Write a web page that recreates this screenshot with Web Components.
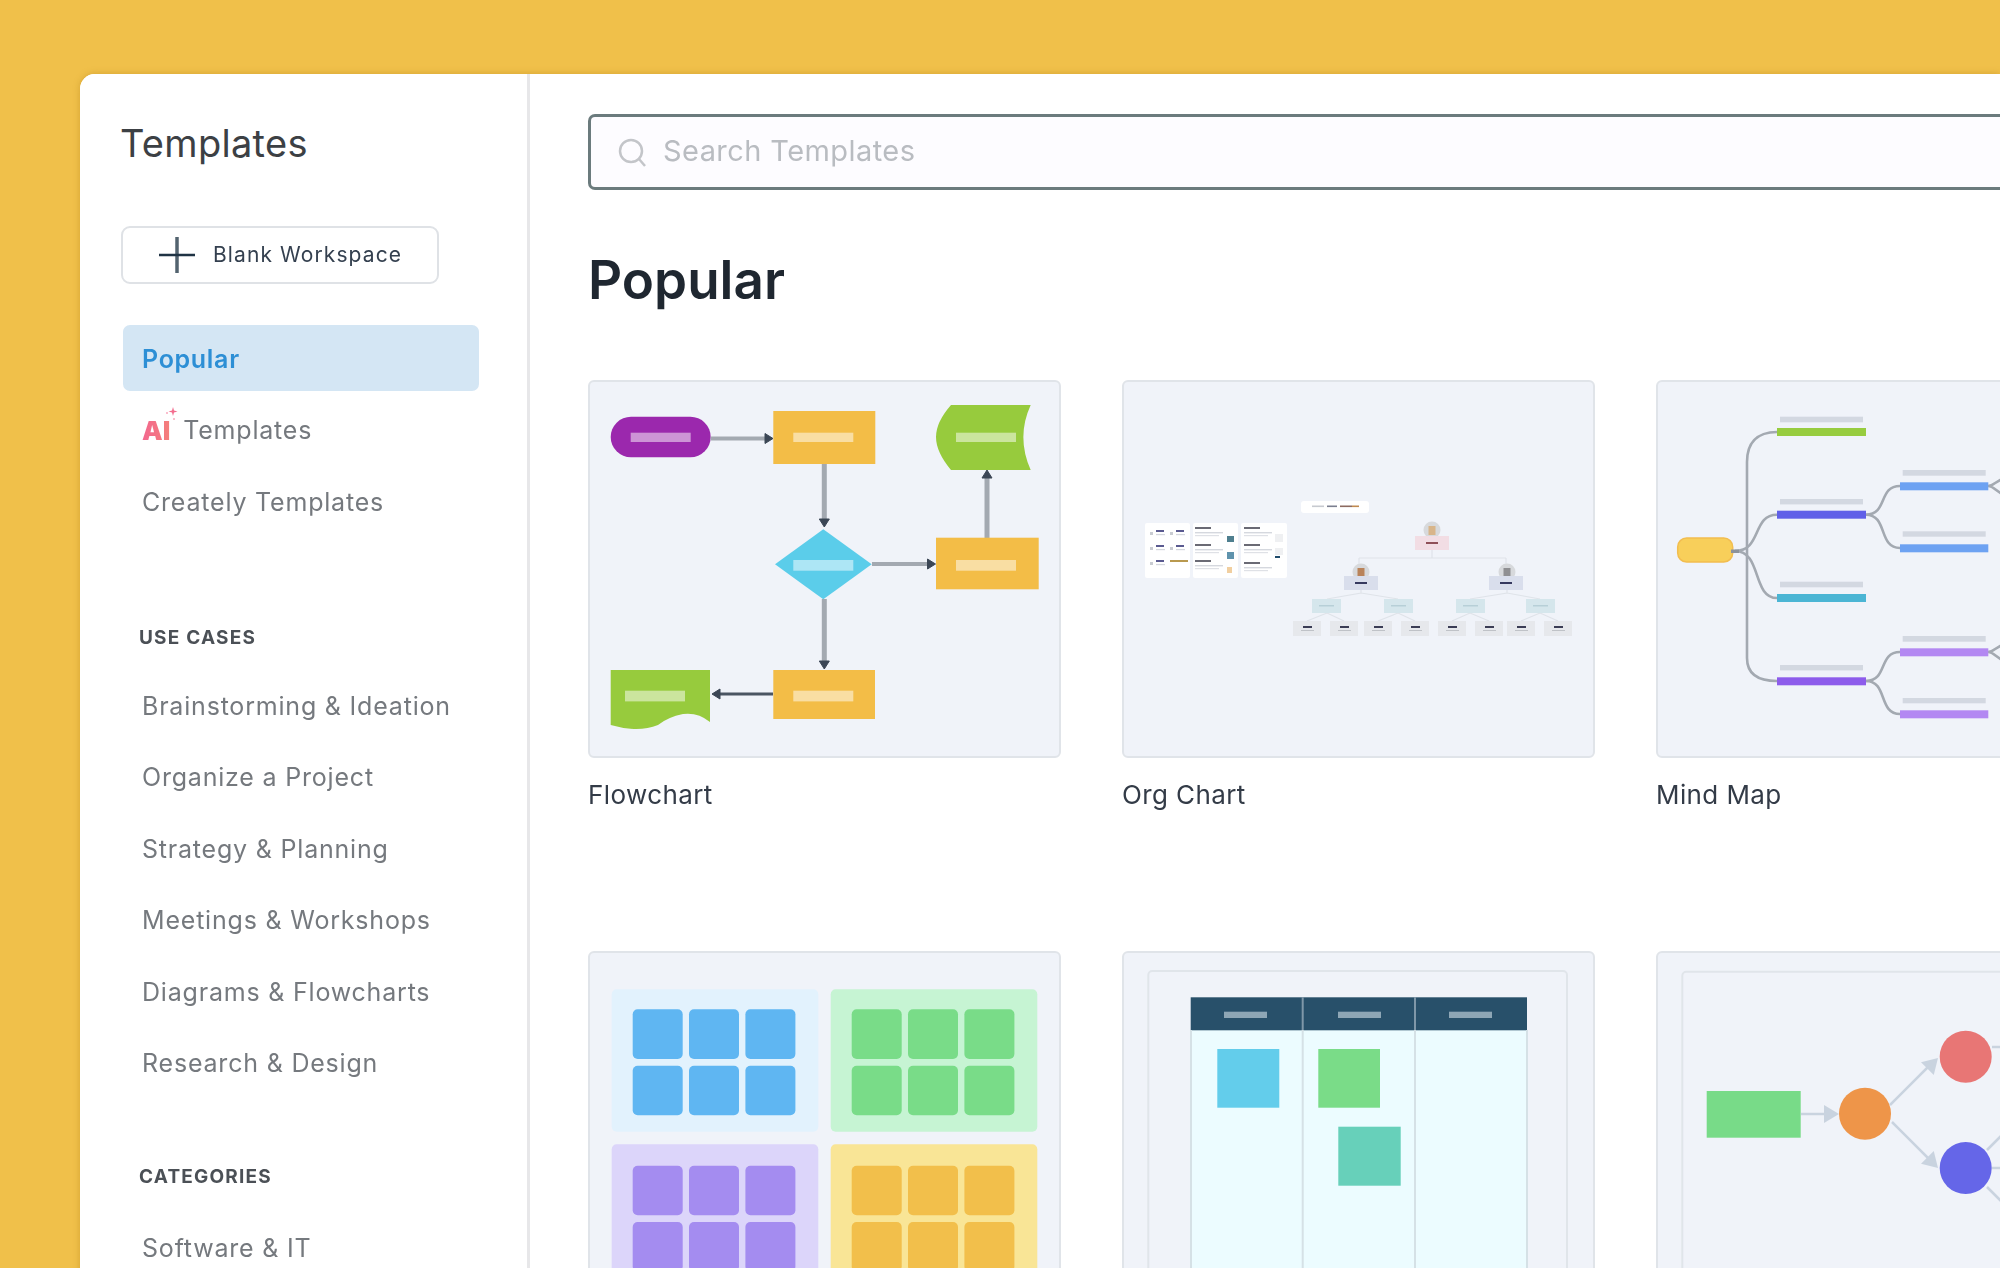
<!DOCTYPE html>
<html lang="en">
<head>
<meta charset="utf-8">
<title>Templates</title>
<style>
html,body{margin:0;padding:0;width:2000px;height:1268px;overflow:hidden;background:#f0c04a;font-family:Inter,"Liberation Sans",sans-serif}
</style>
</head>
<body>
<template-app></template-app>
<script>
const r=(x,y,w,h,f,rx=0)=>`<rect x="${x}" y="${y}" width="${w}" height="${h}" fill="${f}" rx="${rx}"/>`;
const LAB='rgba(255,255,255,.5)';
const gray='#a3a9b1',dark='#3b4655';
const vArrow=(x,y1,y2)=>{const d=y2>y1?1:-1;return `<path d="M${x} ${y1}V${y2-d*8}" stroke="${gray}" stroke-width="5"/><path d="M${x-5} ${y2-d*8}H${x+5}L${x} ${y2}Z" fill="${dark}" stroke="${dark}" stroke-width="1"/>`};
const hArrow=(x1,x2,y,c=gray,w=4)=>{const d=x2>x1?1:-1;return `<path d="M${x1} ${y}H${x2-d*8}" stroke="${c}" stroke-width="${w}"/><path d="M${x2-d*8} ${y-5}V${y+5}L${x2} ${y}Z" fill="${dark}" stroke="${dark}" stroke-width="1"/>`};

const flow=`
${r(22.7,36.7,100,40.6,'#9b28ad',20.3)}${r(42.7,52.7,60,9.3,LAB)}
${hArrow(122.7,185,58.5)}
${r(185.3,31,102,53,'#f3bd47')}${r(205.3,52.7,60,9.3,LAB)}
${vArrow(236.3,84,147)}
<path d="M363 25H442.7Q428 57 442.7 90H363Q348 72 348 57Q348 42 363 25Z" fill="#97cb3d"/>${r(368,52.7,60,9.3,LAB)}
${vArrow(399,158,90)}
<path d="M235.3 149.3L283.7 184.3L235.3 219.3L187 184.3Z" fill="#5bcdea"/>${r(205.3,180,60,10.7,LAB)}
${hArrow(284,347.5,184)}
${r(348,157.7,102.7,51.6,'#f3bd47')}${r(368,180,60,10.7,LAB)}
${vArrow(236.3,219,289)}
${r(185.3,290,101.7,49,'#f3bd47')}${r(205.3,310.7,60,10.7,LAB)}
${hArrow(185,124,314,'#4a5562',3)}
<path d="M22.7 290H122V342Q110 332 95 334Q80 337 70 345Q50 353 22.7 345Z" fill="#97cb3d"/>${r(37,310.7,60,10.7,LAB)}`;

const org=(()=>{
  let s='';
  const pane=(x,w)=>r(x,143,w,55,'#fff',2);
  s+=pane(23,45)+pane(71,45)+pane(119,46)+r(179,121,68,12,'#fff',3);
  s+=r(190,125.5,12,1.6,'#c7cad0')+r(205,125.5,10,1.6,'#7b7f8f')+r(218,125.5,12,1.6,'#8c6a60')+r(230,125.5,7,1.6,'#c08a50');
  [[28,150],[28,165],[28,180],[48,150],[48,165]].forEach(([x,y])=>{s+=r(x+6,y,8,2,'#5a5a90')+r(x+6,y+4,9,1.2,'#d5d8de')+r(x,y+2,3,3,'#c9ccd2')});
  s+=r(48,180,18,2,'#b9994f');
  [[73,147],[73,164],[73,180],[122,147],[122,164],[122,182]].forEach(([x,y])=>{s+=r(x,y,16,2,'#6a6a74')+r(x,y+5,28,1.4,'#d5d8de')+r(x,y+8,24,1.2,'#dfe1e6')});
  s+=r(105,156,7,6,'#4f7f8f')+r(105,172,7,7,'#5f93ad')+r(105,187,5,6,'#f1cfa0')+r(153,176,5,2,'#1f4b6b')+r(153,154,8,8,'#eff0f2')+r(153,168,8,7,'#eff0f2');
  s+=`<path d="M237 178H384M310 170V178M237 178V184M384 178V184M239 210V213L205 219M239 213L276 219M385 210V213L348 219M385 213L418 219M205 233L185 241M205 233L222 241M276 233L256 241M276 233L293 241M348 233L330 241M348 233L367 241M418 233L399 241M418 233L436 241" stroke="#dfe3e9" stroke-width="1.2" fill="none"/>`;
  const avatar=(x,y,c)=>`<circle cx="${x}" cy="${y}" r="8.5" fill="#d7d9dc"/>${r(x-3.5,y-4,7,9,c)}`;
  s+=avatar(310,150,'#d8b58a')+avatar(239,192,'#b9835a')+avatar(385,192,'#8f8f92');
  s+=r(293,156,34,14,'#f2dde4')+r(222,196,34,14,'#d9deec')+r(367,196,34,14,'#d9deec');
  s+=r(304,162,12,2,'#8f5058')+r(233,202,12,2,'#36395f')+r(378,202,12,2,'#36395f');
  [190,262,334,404].forEach(x=>{s+=r(x,219,29,14,'#d5e6ec')+r(x+7,225,15,1.5,'#b7cfd7')});
  [171,208,242,279,316,353,385,422].forEach(x=>{s+=r(x,241,28,15,'#e6e8ec')+r(x+10,246,9,2,'#3b3d55')+r(x+8,250,13,1,'#bfc2c7')});
  return `<g style="filter:blur(.7px)">${s}</g>`;
})();

const mindBar=(x,y,w,c)=>r(x,y,w,8,c);
const mind=`
<g fill="none" stroke="#a3a9b1" stroke-width="2.6">
<path d="M121 52C100 52 91 64 91 82V278C91 292 100 301 121 301"/>
<path d="M79 171C106 171 96 134.700 121 134.700"/><path d="M79 171C106 171 96 218 121 218"/>
<path d="M210 134.700C232 134.700 222 106 244 106"/><path d="M210 134.700C232 134.700 222 168 244 168"/>
<path d="M210 301C232 301 222 272 244 272"/><path d="M210 301C232 301 222 334 244 334"/>
<path d="M332 106C338 106 340 100 350 98M332 106C338 106 340 112 350 116M332 272C338 272 340 266 350 264M332 272C338 272 340 278 350 282"/>
</g>
${r(21.7,158,55,24,'#f8cf5a',9).replace('/>',' stroke="#f2bd4f" stroke-width="1.500"/>')}
${r(75,169.500,8,3.500,'#8d939b')}
${r(124,36.700,83,5.600,'#d3d8e1')}${mindBar(121,48,89,'#97cc3f')}
${r(124,119,83,5.400,'#d3d8e1')}${mindBar(121,130.700,89,'#6060e8')}
${r(124,201.700,83,5.600,'#d3d8e1')}${mindBar(121,214,89,'#4bb5d4')}
${r(124,285,83,5.400,'#d3d8e1')}${mindBar(121,297.300,89,'#8d5ceb')}
${r(246.700,90,83,5.700,'#d3d8e1')}${mindBar(244,102.300,88.300,'#6da2f2')}
${r(246.700,151.300,83,5.400,'#d3d8e1')}${mindBar(244,164.300,88.300,'#6da2f2')}
${r(246.700,256,83,5.700,'#d3d8e1')}${mindBar(244,268.300,88.300,'#b388f2')}
${r(246.700,318,83,5.300,'#d3d8e1')}${mindBar(244,330.300,88.300,'#b388f2')}`;

const swot=(()=>{
  let s='';
  [[23.7,38.3,'#e2f2fd','#5fb6f2',44.7,58.3],[242.7,38.3,'#c6f4d3','#79dc88',263.7,58.3],[23.7,193.3,'#dcd5fa','#a48cf0',44.7,214.7],[242.7,193.3,'#f9e596','#f2bf4b',263.7,214.7]].forEach(([x,y,bg,fg,tx,ty])=>{
    s+=r(x,y,206.6,142.4,bg,5);
    [0,56.3,112.7].forEach(dx=>[0,56.4].forEach(dy=>{s+=r(tx+dx,ty+dy,50,49.6,fg,5)}));
  });
  return s;
})();

const kanban=`
${r(26.300,20,418.700,400,'none',4).replace('/>',' stroke="#e0e5ea" stroke-width="2"/>')}
${r(68.700,79,336.300,320,'#ecfcff')}
${r(68.700,46.300,336.300,33,'#28506a')}
<path d="M69 79V400M180.700 79V400M293 79V400M405 79V400" stroke="#d5e1e6" stroke-width="2"/>
<path d="M180.700 46V79M293 46V79" stroke="#7f97a8" stroke-width="2"/>
${r(102,60.700,43,6.300,'#8ea6b5')}${r(216,60.700,43,6.300,'#8ea6b5')}${r(327,60.700,43,6.300,'#8ea6b5')}
${r(95.300,98,62,58.700,'#63cdeb')}
${r(196.300,98,61.700,58.700,'#7adc88')}
${r(216.300,175.700,62.400,59,'#67d0ba')}`;

const ah=(x,y,a)=>`<path d="M0 0L-15 -9V9Z" fill="#c9d3df" transform="translate(${x} ${y}) rotate(${a})"/>`;
const flowMap=`
${r(26.300,20.700,460,400,'none',4).replace('/>',' stroke="#e0e5ea" stroke-width="2"/>')}
${r(50.700,140,94,46.700,'#78db88')}
<g stroke="#c9d3df" stroke-width="2.500" fill="none"><path d="M145 163H175M234 154L275 113M236 171L275 210M336 96H350M331 199L350 180M336 217H350M331 236L350 255"/></g>
${ah(183,163,0)}${ah(282,107,-45)}${ah(282,217,45)}
<circle cx="209" cy="162.700" r="26" fill="#ee9549"/>
<circle cx="309.700" cy="105.700" r="26" fill="#e87675"/>
<circle cx="309.700" cy="217" r="26" fill="#6566e8"/>`;

const art=b=>`<svg slot="art" xmlns="http://www.w3.org/2000/svg" width="469" height="374" viewBox="2 2 469 374" aria-hidden="true">${b}</svg>`;

function define(name,html){
  customElements.define(name,class extends HTMLElement{
    constructor(){super();this.attachShadow({mode:'open'}).innerHTML=html;}
  });
}

define('blank-button',`<style>
:host{display:flex;align-items:center;width:318px;height:58px;box-sizing:border-box;border:2px solid #dfe2e6;border-radius:9px;background:#fff;padding-left:36px;gap:18px;color:#34404f;font:400 21px/1 Inter,"Liberation Sans",sans-serif;letter-spacing:1.1px;white-space:nowrap}
svg{flex:none}
span{position:relative;top:-1px}
</style><svg width="36" height="36" viewBox="0 0 36 36"><path d="M18 0V36" stroke="#53636f" stroke-width="3.500"/><path d="M0 18H36" stroke="#1f3344" stroke-width="2.500"/></svg><span><slot></slot></span>`);

define('nav-item',`<style>
:host{display:flex;align-items:center;box-sizing:border-box;height:66px;width:356px;margin-left:2px;padding:2px 0 0 19px;border-radius:7px;color:#75797e;font:400 25px/1 Inter,"Liberation Sans",sans-serif;letter-spacing:.8px;white-space:nowrap}
:host([active]){background:#d4e6f4;color:#2d8fd5;font-weight:600;letter-spacing:.7px}
</style><slot></slot>`);

define('ai-mark',`<style>
:host{display:inline-block;position:relative;margin-right:13px;font:700 26px/1 Inter,"Liberation Sans",sans-serif;letter-spacing:0}
b{background:linear-gradient(90deg,#f3678f,#f47f7a);-webkit-background-clip:text;background-clip:text;color:transparent}
svg{position:absolute;right:-8px;top:-11px}
</style><b>AI</b><svg width="13" height="14" viewBox="0 0 13 14"><path d="M8 0L9 3.500L12.500 4.500L9 5.500L8 9L7 5.500L3.500 4.500L7 3.500Z" fill="#f36d8e"/><circle cx="2" cy="6" r="1" fill="#f9a9bd"/><circle cx="9" cy="12" r="1" fill="#f9a9bd"/></svg>`);

define('side-label',`<style>
:host{display:block;height:24px;padding-left:18px;font:700 19px/24px Inter,"Liberation Sans",sans-serif;color:#4b5056;letter-spacing:1.2px;white-space:nowrap}
</style><slot></slot>`);

define('template-sidebar',`<style>
:host{display:block;flex:none;width:450px;box-sizing:border-box;border-right:3px solid #e7e7e9;padding:44px 0 0 41px;background:#fff}
h2{margin:0 0 0 -1px;font:400 38px/50px Inter,"Liberation Sans",sans-serif;letter-spacing:.3px;color:#3c4044}
blank-button{margin-top:58px}
.nav{display:flex;flex-direction:column;gap:5.500px;margin-top:41px}
.uc{margin-top:92px}
.cat{margin-top:69px}
.list{margin-top:22px}
.list2{margin-top:26px}
</style>
<h2>Templates</h2>
<blank-button>Blank Workspace</blank-button>
<div class="nav">
<nav-item active>Popular</nav-item>
<nav-item><ai-mark></ai-mark>Templates</nav-item>
<nav-item>Creately Templates</nav-item>
</div>
<side-label class="uc">USE CASES</side-label>
<div class="nav list">
<nav-item>Brainstorming &amp; Ideation</nav-item>
<nav-item>Organize a Project</nav-item>
<nav-item>Strategy &amp; Planning</nav-item>
<nav-item>Meetings &amp; Workshops</nav-item>
<nav-item>Diagrams &amp; Flowcharts</nav-item>
<nav-item>Research &amp; Design</nav-item>
</div>
<side-label class="cat">CATEGORIES</side-label>
<div class="nav list2">
<nav-item>Software &amp; IT</nav-item>
</div>`);

define('search-box',`<style>
:host{display:flex;align-items:center;box-sizing:border-box;height:76px;width:100%;border:3px solid #6b7b7d;border-right:0;border-radius:7px 0 0 7px;background:#fdfcff;padding:0 0 3px 26px;gap:16px;color:#b9bcc1;font:400 29px/1 Inter,"Liberation Sans",sans-serif;letter-spacing:.42px}
svg{flex:none;margin-top:5px}
</style><svg width="30" height="30" viewBox="0 0 30 30" fill="none" stroke="#c3c5c9" stroke-width="2.500"><circle cx="14" cy="13" r="11"/><path d="M22 21L28 28"/></svg><slot></slot>`);

define('template-card',`<style>
:host{display:block;width:473px}
.art{box-sizing:border-box;width:473px;height:378px;border:2px solid #e0e4e9;border-radius:6px;background:#f0f3f9;overflow:hidden}
.art ::slotted(svg){display:block}
.cap{margin-top:20px;height:34px;font:400 26px/34px Inter,"Liberation Sans",sans-serif;color:#333b47;letter-spacing:.4px;white-space:nowrap}
</style><div class="art"><slot name="art"></slot></div><div class="cap"><slot></slot></div>`);

define('template-main',`<style>
:host{display:block;flex:1;min-width:0;box-sizing:border-box;padding:40px 0 0 58px;background:#fff}
h1{margin:50px 0 0;font:600 53px/80px Inter,"Liberation Sans",sans-serif;color:#1f2730;letter-spacing:0}
.grid{display:grid;grid-template-columns:repeat(3,473px);column-gap:61px;row-gap:139px;margin-top:60px}
</style>
<search-box>Search Templates</search-box>
<h1>Popular</h1>
<div class="grid">
<template-card>${art(flow)}Flowchart</template-card>
<template-card>${art(org)}Org Chart</template-card>
<template-card>${art(mind)}Mind Map</template-card>
<template-card>${art(swot)}</template-card>
<template-card>${art(kanban)}</template-card>
<template-card>${art(flowMap)}</template-card>
</div>`);

define('template-app',`<style>
:host{display:block;width:2000px;height:1268px;overflow:hidden;box-sizing:border-box;padding:74px 0 0 80px;background:#f0c04a}
.panel{display:flex;height:1300px;background:#fff;border-radius:15px 0 0 0;box-shadow:0 0 7px rgba(170,120,20,.4);overflow:hidden;filter:blur(.5px)}
</style><div class="panel"><template-sidebar></template-sidebar><template-main></template-main></div>`);
</script>
</body>
</html>
